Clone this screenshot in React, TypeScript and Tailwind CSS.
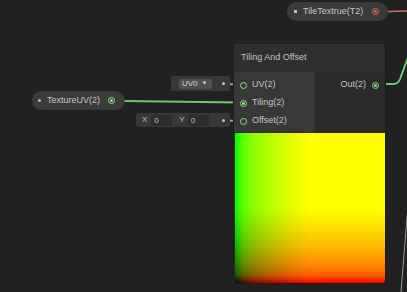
import React from "react";

// small port glyphs used on the graph nodes
function InPort({ connected = false }: { connected?: boolean }) {
  return (
    <span className="flex items-center justify-center w-[7px] h-[7px] rounded-full border-[1.5px] border-[#8fe08f] shrink-0">
      {connected && <span className="w-[3px] h-[3px] rounded-full bg-[#8fe08f]" />}
    </span>
  );
}

function Row({ label, connected }: { label: string; connected?: boolean }) {
  return (
    <div className="flex items-center h-[18px] gap-[5px] pl-[6px]">
      <InPort connected={connected} />
      <span>{label}</span>
    </div>
  );
}

export default function App() {
  return (
    <div className="relative w-[407px] h-[292px] overflow-hidden bg-[#212121] text-[9px] text-[#c4c4c4] font-['Liberation_Sans',Arial,sans-serif]">
      {/* wires */}
      <svg className="absolute inset-0" width="407" height="292" viewBox="0 0 407 292">
        <line x1="124" y1="101" x2="240" y2="102.5" stroke="#6cc86c" strokeWidth="2" />
        <line x1="223" y1="84" x2="241" y2="84.5" stroke="#6cc86c" strokeWidth="2" />
        <line x1="223" y1="120.5" x2="241" y2="121" stroke="#6cc86c" strokeWidth="2" />
        <path d="M380 84 L394 84 Q398 84 400 79 L413 44" fill="none" stroke="#6cc86c" strokeWidth="2" />
        <line x1="388" y1="11.5" x2="410" y2="11" stroke="#d86a6a" strokeWidth="1.5" />
        <line x1="408" y1="205" x2="401" y2="292" stroke="#9a9a9a" strokeWidth="1" />
      </svg>

      {/* TileTextrue property node */}
      <div className="absolute left-[287px] top-[2px] w-[101px] h-[19px] rounded-full bg-[#3b3b3b] flex items-center pl-[7px] pr-[9px]">
        <span className="w-[3px] h-[3px] bg-[#8fe08f]" />
        <span className="ml-[6px] text-[#c8c8c8]">TileTextrue(T2)</span>
        <span className="ml-auto flex items-center justify-center w-[7px] h-[7px] rounded-full border-[1.5px] border-[#e06262]">
          <span className="w-[3px] h-[3px] rounded-full bg-[#e06262]" />
        </span>
      </div>

      {/* TextureUV property node */}
      <div className="absolute left-[32px] top-[91px] w-[93px] h-[19px] rounded-full bg-[#3b3b3b] flex items-center pl-[6px] pr-[10px]">
        <span className="w-[3px] h-[3px] rounded-full bg-[#8fe08f]" />
        <span className="ml-[6px] text-[#c8c8c8]">TextureUV(2)</span>
        <span className="ml-auto flex items-center justify-center w-[7px] h-[7px] rounded-full border-[1.5px] border-[#8fe08f]">
          <span className="w-[3px] h-[3px] rounded-full bg-[#8fe08f]" />
        </span>
      </div>

      {/* UV channel dropdown */}
      <div className="absolute left-[171px] top-[76px] w-[59px] h-[15px] rounded-[2px] bg-[#383838] flex items-center pl-[8px] pr-[5px]">
        <div className="flex items-center gap-[4px] w-[33px] h-[10px] rounded-[2px] bg-[#505050] px-[3px] text-[8px] text-[#d0d0d0]">
          <span>UV0</span>
          <span className="text-[6px]">▼</span>
        </div>
        <span className="ml-auto w-[3px] h-[3px] rounded-full bg-[#8fe08f]" />
      </div>

      {/* offset vector field */}
      <div className="absolute left-[136px] top-[113px] w-[94px] h-[14px] rounded-[2px] bg-[#383838] flex items-center pl-[6px] pr-[5px] text-[8px]">
        <span>X</span>
        <span className="ml-[4px] w-[21px] h-[11px] rounded-[2px] bg-[#2c2c2c] pl-[3px] leading-[11px]">0</span>
        <span className="ml-[7px]">Y</span>
        <span className="ml-[3px] w-[21px] h-[11px] rounded-[2px] bg-[#2c2c2c] pl-[3px] leading-[11px]">0</span>
        <span className="ml-auto w-[3px] h-[3px] rounded-full bg-[#8fe08f]" />
      </div>

      {/* Tiling And Offset node */}
      <div className="absolute left-[233px] top-[43px] w-[153px] rounded-[4px] bg-[#2a2a2a] border border-[#1c1c1c] overflow-hidden">
        <div className="h-[28px] bg-[#2f2f2f] flex items-center pl-[7px] text-[#c0c0c0]">Tiling And Offset</div>
        <div className="flex">
          <div className="w-[81px] bg-[#383838] pt-[4px] pb-[2px]">
            <Row label="UV(2)" />
            <Row label="Tiling(2)" connected />
            <Row label="Offset(2)" />
          </div>
          <div className="flex-1 bg-[#2a2a2a] pt-[4px]">
            <div className="flex items-center justify-end h-[18px] gap-[6px] pr-[6px]">
              <span>Out(2)</span>
              <InPort connected />
            </div>
          </div>
        </div>
        <div className="mt-px mx-[0.5px] h-[150px] rounded-b-[3px] bg-black bg-blend-screen bg-[linear-gradient(to_right,#000_0%,#590000_5%,#7c0000_10%,#950000_15%,#aa0000_20%,#bc0000_25%,#cb0000_30%,#da0000_35%,#e70000_40%,#f40000_45%,#f00_50%,#f00_100%),linear-gradient(to_top,#000_0%,#005900_5%,#007c00_10%,#009500_15%,#00aa00_20%,#00bc00_25%,#00cb00_30%,#00da00_35%,#00e700_40%,#00f400_45%,#0f0_50%,#0f0_100%)]" />
      </div>
    </div>
  );
}
